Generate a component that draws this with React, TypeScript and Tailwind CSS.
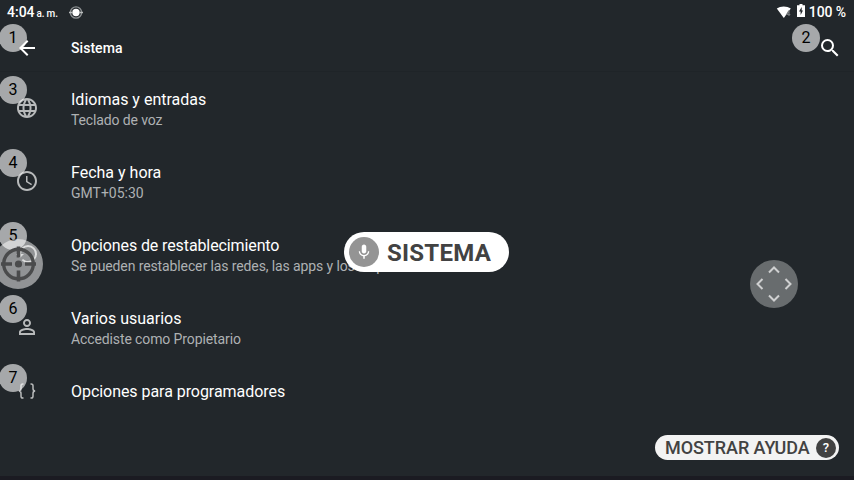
import React from "react";

function Badge({ n, className }: { n: number; className: string }) {
  return (
    <span className={`absolute flex h-7 w-7 items-center justify-center rounded-full bg-white/60 text-[16px] leading-none text-black ${className}`}>
      {n}
    </span>
  );
}

const material = "h-6 w-6 fill-current";

function Globe() {
  return (
    <svg viewBox="0 0 24 24" className={material}>
      <path d="M11.99 2C6.47 2 2 6.48 2 12s4.47 10 9.99 10C17.52 22 22 17.52 22 12S17.52 2 11.99 2zm6.93 6h-2.95c-.32-1.25-.78-2.45-1.38-3.56 1.84.63 3.37 1.91 4.33 3.56zM12 4.04c.83 1.2 1.48 2.53 1.91 3.96h-3.82c.43-1.43 1.08-2.76 1.91-3.96zM4.26 14C4.1 13.36 4 12.69 4 12s.1-1.36.26-2h3.38c-.08.66-.14 1.32-.14 2s.06 1.34.14 2H4.26zm.82 2h2.95c.32 1.25.78 2.45 1.38 3.56-1.84-.63-3.37-1.9-4.33-3.56zm2.95-8H5.08c.96-1.66 2.49-2.93 4.33-3.56C8.81 5.55 8.35 6.75 8.03 8zM12 19.96c-.83-1.2-1.48-2.53-1.91-3.96h3.82c-.43 1.43-1.08 2.76-1.91 3.96zM14.34 14H9.66c-.09-.66-.16-1.32-.16-2s.07-1.35.16-2h4.68c.09.65.16 1.32.16 2s-.07 1.34-.16 2zm.25 5.56c.6-1.11 1.06-2.31 1.38-3.56h2.95c-.96 1.65-2.49 2.93-4.33 3.56zM16.36 14c.08-.66.14-1.32.14-2s-.06-1.34-.14-2h3.38c.16.64.26 1.31.26 2s-.1 1.36-.26 2h-3.38z" />
    </svg>
  );
}

function Clock() {
  return (
    <svg viewBox="0 0 24 24" className={material}>
      <path d="M11.99 2C6.47 2 2 6.48 2 12s4.47 10 9.99 10C17.52 22 22 17.52 22 12S17.52 2 11.99 2zM12 20c-4.42 0-8-3.58-8-8s3.58-8 8-8 8 3.58 8 8-3.58 8-8 8zm.5-13H11v6l5.25 3.15.75-1.23-4.5-2.67z" />
    </svg>
  );
}

function Restore() {
  return (
    <svg viewBox="0 0 24 24" className={material}>
      <path d="M13 3a9 9 0 0 0-9 9H1l3.890 3.890.07.14L9 12H6a7 7 0 1 1 7 7c-1.930 0-3.680-.79-4.940-2.060l-1.420 1.420A8.950 8.950 0 0 0 13 21a9 9 0 0 0 0-18z" />
    </svg>
  );
}

function Person() {
  return (
    <svg viewBox="0 0 24 24" className={material}>
      <path d="M12 5.900a2.100 2.100 0 1 1 0 4.200 2.100 2.100 0 0 1 0-4.200m0 9c2.970 0 6.100 1.460 6.100 2.100v1.100H5.900V17c0-.64 3.130-2.100 6.100-2.100M12 4C9.790 4 8 5.790 8 8s1.790 4 4 4 4-1.790 4-4-1.790-4-4-4zm0 9c-2.670 0-8 1.340-8 4v3h16v-3c0-2.660-5.330-4-8-4z" />
    </svg>
  );
}

function Braces() {
  return (
    <svg viewBox="0 0 24 24" className="h-6 w-6 fill-none stroke-current" strokeWidth="1.5">
      <path d="M8.500 5H7.800C6.600 5 6 5.700 6 6.800v2.700C6 11 5.200 12 3.800 12 5.200 12 6 13 6 14.500v2.700C6 18.300 6.600 19 7.800 19h.7M15.500 5h.7c1.200 0 1.800.7 1.800 1.800v2.700c0 1.500.8 2.500 2.200 2.500-1.400 0-2.200 1-2.200 2.500v2.700c0 1.100-.6 1.800-1.800 1.800h-.7" />
    </svg>
  );
}

const rows = [
  { title: "Idiomas y entradas", sub: "Teclado de voz", icon: <Globe />, titleClass: "", subClass: "tracking-[-0.12px]" },
  { title: "Fecha y hora", sub: "GMT+05:30", icon: <Clock />, titleClass: "", subClass: "" },
  { title: "Opciones de restablecimiento", sub: "Se pueden restablecer las redes, las apps y los dispositivos", icon: <Restore />, titleClass: "tracking-[-0.11px]", subClass: "tracking-[-0.11px]" },
  { title: "Varios usuarios", sub: "Accediste como Propietario", icon: <Person />, titleClass: "", subClass: "tracking-[-0.11px]" },
  { title: "Opciones para programadores", sub: "", icon: <Braces />, titleClass: "tracking-[-0.05px]", subClass: "" },
];

export default function App() {
  return (
    <div className="relative flex h-[480px] w-[854px] flex-col overflow-hidden bg-[#22272b] font-['Roboto',sans-serif] text-white">
      <div className="flex h-6 items-center justify-between pr-2 pl-[7px] text-[14px] font-medium">
        <div className="flex items-center">
          <span className="flex w-[62px] items-baseline gap-[2px] pt-px whitespace-nowrap leading-6">
            4:04 <span className="text-[10px] tracking-[-0.2px]">a. m.</span>
          </span>
          <svg viewBox="0 0 16 16" className="h-4 w-4">
            <circle cx="7" cy="8.500" r="5.600" fill="none" stroke="#8b8f91" strokeWidth="1.400" />
            <path d="M0 8.500h3m8 0h3" stroke="#b8bbbc" strokeWidth="1.300" />
            <circle cx="7" cy="8.500" r="3.700" fill="#fff" />
          </svg>
        </div>
        <div className="flex items-center">
          <svg viewBox="0 0 16 14" className="h-3.5 w-4">
            <path d="M.8 3.500C4.500.8 11 .8 14.800 3.500L7.800 13z" fill="#fff" />
            <path d="M13 5.500l-2.200 4h3.500M13 6v5" fill="none" stroke="#777b7d" strokeWidth="1.200" />
          </svg>
          <svg viewBox="0 0 8 13" className="mr-1 mb-[3px] ml-[5px] h-[13px] w-2">
            <path d="M2.500 0h3v1.300H8V13H0V1.300h2.500z" fill="#fff" />
            <path d="M4.700 3L2 7.600h1.600V11L6 6.500H4.700z" fill="#22272b" />
          </svg>
          <span className="pt-px tracking-[-0.1px]">100 %</span>
        </div>
      </div>

      <header className="relative flex h-12 items-center border-b border-[#1f2428]">
        <svg viewBox="0 0 24 24" className="mt-px ml-[15px] h-6 w-6 fill-white">
          <path d="M20 11H7.830l5.590-5.590L12 4l-8 8 8 8 1.410-1.410L7.830 13H20z" />
        </svg>
        <h1 className="ml-8 flex-1 pt-[2px] text-[14px] font-medium tracking-[0.05px]">Sistema</h1>
        <svg viewBox="0 0 24 24" className="mt-px mr-3 h-6 w-6 fill-white">
          <path d="M15.500 14h-.79l-.28-.27A6.470 6.470 0 0 0 16 9.500 6.500 6.500 0 1 0 9.500 16c1.610 0 3.090-.59 4.230-1.570l.27.28v.79l5 4.990L20.490 19zm-6 0a4.500 4.500 0 1 1 0-9 4.500 4.500 0 0 1 0 9z" />
        </svg>
        <Badge n={1} className="top-0 -left-px" />
        <Badge n={2} className="top-0 left-[792px]" />
      </header>

      <main className="flex flex-1 flex-col pt-1">
        {rows.map((r, i) => (
          <section key={r.title} className={`relative flex shrink-0 ${i < 4 ? "h-[73px]" : "h-14"}`}>
            <div className={`ml-[15px] w-14 text-[#b8babb] ${i < 4 ? "pt-5" : "pt-[11px]"}`}>{r.icon}</div>
            <div className="pt-3">
              <h2 className={`text-[16px] leading-[23px] ${r.titleClass}`}>{r.title}</h2>
              <p className={`text-[14px] leading-[18px] whitespace-nowrap text-[#aeb1b3] ${r.subClass}`}>{r.sub}</p>
            </div>
            <Badge n={i + 3} className={i < 4 ? "top-0 -left-px" : "-top-1 -left-px"} />
          </section>
        ))}
      </main>
      <div className="h-1 bg-[#1b1b22]" />

      <div className="absolute top-[239px] -left-[7px] h-[50px] w-[50px] rounded-full bg-white/50">
        <svg viewBox="0 0 50 50" className="h-full w-full fill-none stroke-[#4a4b4c]">
          <circle cx="25.500" cy="25" r="14.800" strokeWidth="3.400" />
          <path d="M25.500 7.500v11M25.500 31.500v11M8 25h11M32 25h11" strokeWidth="3.600" />
          <circle cx="25.500" cy="25" r="3.600" className="fill-[#4a4b4c] stroke-none" />
        </svg>
      </div>

      <div className="absolute top-[232px] left-[344px] flex h-10 w-[165px] items-center rounded-full bg-white pl-[5px] text-[#424242]">
        <span className="flex h-[30px] w-[30px] items-center justify-center rounded-full bg-[#949494]">
          <svg viewBox="0 0 24 24" className="h-[18px] w-[18px] fill-white">
            <path d="M12 14c1.660 0 3-1.340 3-3V5c0-1.660-1.340-3-3-3S9 3.340 9 5v6c0 1.660 1.340 3 3 3zm5.300-3c0 3-2.540 5.100-5.300 5.100S6.700 14 6.700 11H5c0 3.410 2.720 6.230 6 6.720V21h2v-3.280c3.280-.48 6-3.300 6-6.720z" />
          </svg>
        </span>
        <span className="ml-2 pt-[2px] text-[24px] font-bold tracking-[0.25px]">SISTEMA</span>
      </div>

      <div className="absolute top-[260px] left-[750px] h-12 w-12 rounded-full bg-[#686c6e]">
        <svg viewBox="0 0 48 48" className="h-full w-full fill-none stroke-[#cfd0d1]" strokeWidth="2">
          <path d="M19 12.500l5-5 5 5M19 35.500l5 5 5-5M12.500 19l-5 5 5 5M35.500 19l5 5-5 5" />
        </svg>
      </div>

      <div className="absolute top-[435px] left-[655px] flex h-[25px] w-[184px] items-center justify-between rounded-full bg-[#f3f3f3] pr-[3px] pl-2.5 text-[#424242]">
        <span className="text-[18px] font-medium whitespace-nowrap tracking-[-0.06px]">MOSTRAR AYUDA</span>
        <span className="flex h-5 w-5 items-center justify-center rounded-full bg-[#424242] text-[13px] font-medium text-white">?</span>
      </div>
    </div>
  );
}
